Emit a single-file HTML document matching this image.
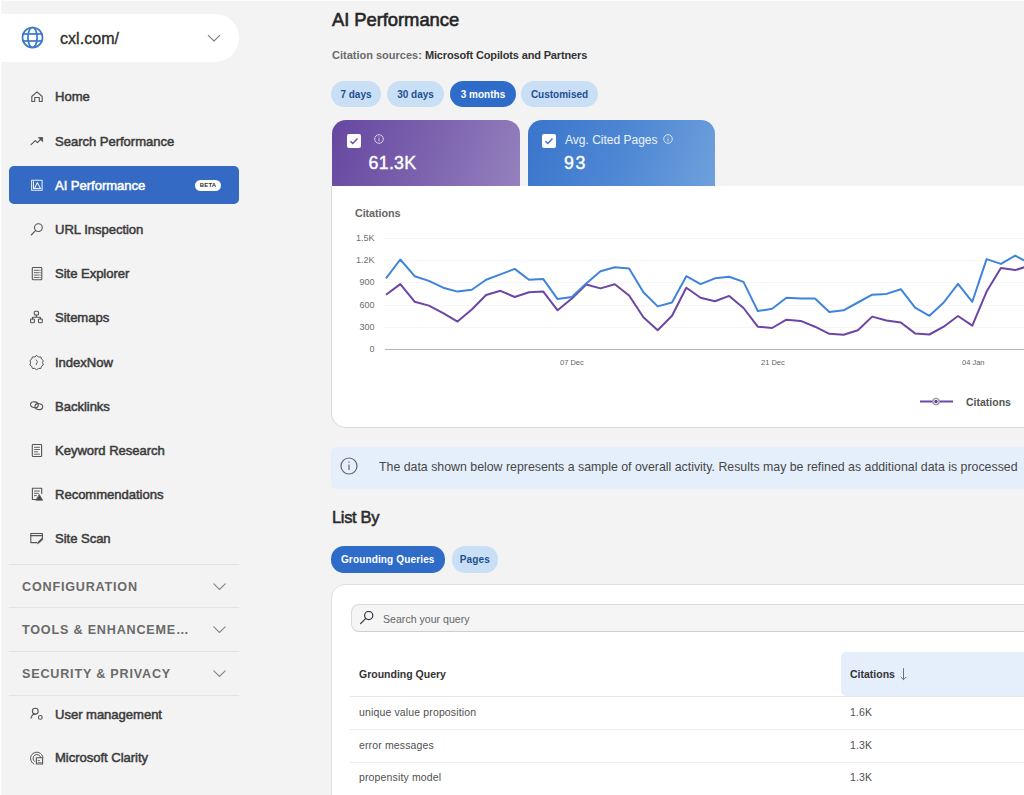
<!DOCTYPE html>
<html><head><meta charset="utf-8">
<style>
*{box-sizing:border-box;margin:0;padding:0}
html,body{width:1024px;height:795px;overflow:hidden;background:#f3f3f3;font-family:"Liberation Sans",sans-serif;color:#242424;position:relative}
.abs{position:absolute}
.topstrip{left:0;top:0;width:1024px;height:1px;background:#fbfbfb}
.leftstrip{left:0;top:0;width:2px;height:795px;background:linear-gradient(90deg,#fff 0 1px,#f7f7f7 1px 2px)}
/* sidebar */
.site{left:0;top:14px;width:239px;height:48px;background:#fff;border-radius:0 24px 24px 0}
.site .t{position:absolute;left:60px;top:16px;font-size:16px;color:#2e2e2e;letter-spacing:0.05px;-webkit-text-stroke:0.35px #2e2e2e}
.nav{left:9px;width:230px;height:38px;border-radius:5px}
.nav .lbl{position:absolute;left:46px;top:11.8px;font-size:13.1px;font-weight:400;letter-spacing:-0.05px;color:#3b3b3b;-webkit-text-stroke:0.5px #3b3b3b;white-space:nowrap}
.nav svg{position:absolute;left:22px;top:13.5px}
.nav.active{background:#3469c4}
.nav.active .lbl{color:#fff;-webkit-text-stroke-color:#fff}
.beta{position:absolute;left:186px;top:14px;width:26px;height:11px;background:#fff;border-radius:6px;font-size:6px;font-weight:700;color:#333;text-align:center;line-height:11px;letter-spacing:0.2px}
.sec{left:9px;width:230px;height:1px;background:#e3e3e3}
.sech{left:22px;font-size:12.6px;font-weight:700;letter-spacing:0.8px;color:#6a6a6a;white-space:nowrap}
.chev{left:213px}
</style></head>
<body>
<div class="abs topstrip"></div>
<div class="abs leftstrip"></div>

<!-- site selector -->
<div class="abs site">
  <svg class="abs" style="left:21px;top:12px" width="23" height="23" viewBox="0 0 23 23" fill="none" stroke="#3b78c9" stroke-width="1.7">
    <circle cx="11.5" cy="11.5" r="10"/>
    <ellipse cx="11.5" cy="11.5" rx="4.6" ry="10"/>
    <line x1="1.5" y1="8" x2="21.5" y2="8"/><line x1="1.5" y1="15" x2="21.5" y2="15"/>
  </svg>
  <div class="t">cxl.com/</div>
  <svg class="abs" style="left:207px;top:20px" width="14" height="8" viewBox="0 0 14 8" fill="none" stroke="#858585" stroke-width="1.2" stroke-linecap="round" stroke-linejoin="round"><path d="M1.3 1.3l5.7 5.7 5.7-5.7"/></svg>
</div>

<!-- nav items -->
<div class="abs nav" style="top:77px">
  <div class="lbl">Home</div>
</div>
<div class="abs nav" style="top:122px">
  <div class="lbl">Search Performance</div>
</div>
<div class="abs nav active" style="top:166px">
  <div class="lbl">AI Performance</div>
  <div class="beta">BETA</div>
</div>
<div class="abs nav" style="top:210px">
  <div class="lbl">URL Inspection</div>
</div>
<div class="abs nav" style="top:254px">
  <div class="lbl">Site Explorer</div>
</div>
<div class="abs nav" style="top:298px">
  <div class="lbl">Sitemaps</div>
</div>
<div class="abs nav" style="top:343px">
  <div class="lbl">IndexNow</div>
</div>
<div class="abs nav" style="top:387px">
  <div class="lbl">Backlinks</div>
</div>
<div class="abs nav" style="top:431px">
  <div class="lbl">Keyword Research</div>
</div>
<div class="abs nav" style="top:475px">
  <div class="lbl">Recommendations</div>
</div>
<div class="abs nav" style="top:519px">
  <div class="lbl">Site Scan</div>
</div>

<!-- section headers -->
<div class="abs sec" style="top:564px"></div>
<div class="abs sech" style="top:580px">CONFIGURATION</div>
<svg class="abs chev" style="top:583px" width="13" height="7" viewBox="0 0 13 7" fill="none" stroke="#858585" stroke-width="1.1" stroke-linecap="round"><path d="M0.8 0.8l5.7 5.7 5.7-5.7"/></svg>
<div class="abs sec" style="top:607px"></div>
<div class="abs sech" style="top:622.5px">TOOLS &amp; ENHANCEME…</div>
<svg class="abs chev" style="top:626px" width="13" height="7" viewBox="0 0 13 7" fill="none" stroke="#858585" stroke-width="1.1" stroke-linecap="round"><path d="M0.8 0.8l5.7 5.7 5.7-5.7"/></svg>
<div class="abs sec" style="top:651px"></div>
<div class="abs sech" style="top:666.5px">SECURITY &amp; PRIVACY</div>
<svg class="abs chev" style="top:670px" width="13" height="7" viewBox="0 0 13 7" fill="none" stroke="#858585" stroke-width="1.1" stroke-linecap="round"><path d="M0.8 0.8l5.7 5.7 5.7-5.7"/></svg>
<div class="abs sec" style="top:695px"></div>

<div class="abs nav" style="top:695px">
  <div class="lbl">User management</div>
</div>
<div class="abs nav" style="top:738.5px">
  <div class="lbl">Microsoft Clarity</div>
</div>


<svg class="abs" style="left:0;top:0" width="320" height="795" viewBox="0 0 320 795" fill="none" stroke="#555" stroke-width="1.1" stroke-linecap="round" stroke-linejoin="round">
  <!-- home -->
  <path d="M31.8 96.5L37 91.8l5.2 4.7V101.5H39.3V97.5h-4.6v4H31.8z"/>
  <!-- search perf -->
  <path d="M31 144.7L35.3 140.6 37.4 142.6 42 138"/><path d="M38.6 137.6H42.6V141.4z" fill="#4a4a4a" stroke-width="0.8"/>
  <!-- AI perf (white) -->
  <g stroke="#e9effa" stroke-width="1.05">
  <rect x="31.6" y="180.2" width="10.5" height="10"/>
  <path d="M33.5 181.5V188.5H40.5M34.5 188.5L37.3 182.5 40.3 188.3"/>
  </g>
  <!-- url inspection -->
  <circle cx="38.4" cy="227.6" r="3.9"/><path d="M35.5 230.6L31.3 235"/>
  <!-- site explorer -->
  <rect x="32.3" y="267.5" width="9.5" height="12.2" rx="0.8"/>
  <path d="M34.3 270.3h4.2M34.3 272.7h4.2M34.3 275.1h4.2M34.3 277.5h4.2" stroke-width="0.9"/><path d="M39.8 270.3h0.4M39.8 272.7h0.4M39.8 275.1h0.4M39.8 277.5h0.4" stroke-width="1"/>
  <!-- sitemaps -->
  <rect x="34.3" y="311.3" width="4.2" height="3.7" rx="1"/>
  <rect x="30.6" y="319" width="3.8" height="3.7" rx="0.6"/><rect x="38.5" y="319" width="3.8" height="3.7" rx="0.6"/>
  <path d="M36.4 315v2.3M32.5 319v-1.7h7.9V319"/>
  <!-- indexnow -->
  <path d="M36.6 355.6l1.9 1.4 2.3-0.1 0.7 2.2 1.8 1.4-0.7 2.2 0.7 2.2-1.8 1.4-0.7 2.2-2.3-0.1-1.9 1.4-1.9-1.4-2.3 0.1-0.7-2.2-1.8-1.4 0.7-2.2-0.7-2.2 1.8-1.4 0.7-2.2 2.3 0.1z" stroke-width="1"/>
  <path d="M36.1 359.8L37.4 361.6 36.3 364.6" stroke-width="0.9"/>
  <!-- backlinks -->
  <ellipse cx="34.4" cy="404.7" rx="3.9" ry="2.9" transform="rotate(12 34.4 404.7)"/>
  <ellipse cx="38.8" cy="406.6" rx="3.9" ry="2.9" transform="rotate(12 38.8 406.6)"/>
  <!-- keyword research -->
  <rect x="32.3" y="444.5" width="9.3" height="12" rx="0.8"/>
  <path d="M34.5 447.3h5M34.5 449.5h5M34.5 451.8h3M34.5 454.2h5" stroke-width="0.9"/>
  <!-- recommendations -->
  <path d="M36.5 499.5H32.4V488.3h9.3v5.3"/>
  <path d="M34.4 491h5M34.4 493.3h4M34.4 495.6h2" stroke-width="0.9"/>
  <path d="M39.4 494.8L42.6 500.2H36.2z" fill="#4a4a4a" stroke-width="0.8"/>
  <!-- site scan -->
  <path d="M36.8 542.6H30.8V533.5h11.6v5.2"/><path d="M30.8 535.6h11.6"/>
  <path d="M37.5 543.6l1-2.2 3.2-3 1.1 1.1-3.1 3.1z" fill="#4a4a4a" stroke-width="0.6"/>
  <!-- user management -->
  <circle cx="35.3" cy="711.2" r="2.9"/><path d="M31 718.2C31.5 715.6 33 714.2 35 714.1"/>
  <circle cx="40.3" cy="717.4" r="1.9"/>
  <!-- clarity -->
  <path d="M33.8 764A6.3 6.3 0 1 1 43 757.3" stroke-width="1"/>
  <path d="M34.6 761.5A3.9 3.9 0 1 1 40.8 757.8" stroke-width="1"/>
  <rect x="36.4" y="757.8" width="6.2" height="6.2" stroke-width="1.1" fill="#f3f3f3"/>
  <path d="M38 762.6h3.2M38 760.6h1.6" stroke-width="0.8"/>
</svg>

<!-- MAIN -->

<style>
.title{left:332px;top:9.3px;font-size:18.4px;font-weight:400;letter-spacing:-0.05px;color:#262626;-webkit-text-stroke:0.6px #262626;white-space:nowrap}
.cit{left:332px;top:49px;font-size:11px;font-weight:700;color:#6b6b6b;white-space:nowrap}
.cit b{color:#333;letter-spacing:-0.15px}
.pill{height:26px;border-radius:13px;background:#c9dff6;color:#1e4f93;font-size:10px;font-weight:700;text-align:center;line-height:28px;white-space:nowrap}
.pill.on{background:#2f6cc9;color:#fff}
.kpi{top:119.5px;height:66.5px;border-radius:14px 14px 0 0;overflow:hidden}
.chk{width:14px;height:14px;background:#fff;border-radius:2px}
.kval{font-size:17.8px;font-weight:400;color:#fff;white-space:nowrap;-webkit-text-stroke:0.4px #fff}
.card{background:#fff;border:1px solid #d9d9d9;border-top:none;border-radius:0 0 15px 15px}
.ylab{font-size:9px;color:#6e6e6e;text-align:right;width:30px;left:344.5px}
.xlab{font-size:7.5px;color:#666;white-space:nowrap}
</style>
<div class="abs title">AI Performance</div>
<div class="abs cit">Citation sources: <b>Microsoft Copilots and Partners</b></div>
<div class="abs pill" style="left:331px;top:81px;width:50px">7 days</div>
<div class="abs pill" style="left:387px;top:81px;width:57px">30 days</div>
<div class="abs pill on" style="left:450px;top:81px;width:66px">3 months</div>
<div class="abs pill" style="left:521px;top:81px;width:77px">Customised</div>

<!-- chart card -->
<div class="abs card" style="left:331px;top:186px;width:720px;height:242px"></div>

<div class="abs kpi" style="left:332px;width:188px;background:linear-gradient(110deg,#6647a0 0%,#7c62ae 50%,#9581bd 100%)">
  <div class="abs chk" style="left:15px;top:14.5px"><svg width="14" height="14" viewBox="0 0 14 14" fill="none" stroke="#6a4ba2" stroke-width="1.4"><path d="M3.5 7.2l2.3 2.3 4.7-5"/></svg></div>
  <svg class="abs" style="left:42px;top:14.5px" width="10" height="10" viewBox="0 0 10 10" fill="none" stroke="#e6def2" stroke-width="0.9"><circle cx="5" cy="5" r="4.3"/><path d="M5 4.3v3M5 2.6v0.8"/></svg>
  <div class="abs kval" style="left:36.5px;top:33.5px;letter-spacing:0.3px">61.3K</div>
</div>
<div class="abs kpi" style="left:528px;width:187px;background:linear-gradient(110deg,#3a75cc 0%,#5089d4 55%,#6ea1dc 100%)">
  <div class="abs chk" style="left:14px;top:14.5px"><svg width="14" height="14" viewBox="0 0 14 14" fill="none" stroke="#3b76cc" stroke-width="1.4"><path d="M3.5 7.2l2.3 2.3 4.7-5"/></svg></div>
  <div class="abs" style="left:37px;top:13.3px;font-size:12px;color:#eef3fb;white-space:nowrap">Avg. Cited Pages</div>
  <svg class="abs" style="left:135px;top:14px" width="10" height="10" viewBox="0 0 10 10" fill="none" stroke="#e6eef9" stroke-width="0.9"><circle cx="5" cy="5" r="4.3"/><path d="M5 4.3v3M5 2.6v0.8"/></svg>
  <div class="abs kval" style="left:36px;top:33.5px;letter-spacing:1.6px">93</div>
</div>

<div class="abs" style="left:355px;top:206.5px;font-size:10.8px;font-weight:700;color:#666;letter-spacing:-0.1px">Citations</div>
<div class="abs ylab" style="top:233px">1.5K</div>
<div class="abs ylab" style="top:255px">1.2K</div>
<div class="abs ylab" style="top:277px">900</div>
<div class="abs ylab" style="top:300px">600</div>
<div class="abs ylab" style="top:322px">300</div>
<div class="abs ylab" style="top:344px">0</div>
<div class="abs xlab" style="left:560px;top:357.5px">07 Dec</div>
<div class="abs xlab" style="left:761px;top:357.5px">21 Dec</div>
<div class="abs xlab" style="left:962px;top:357.5px">04 Jan</div>

<svg class="abs" style="left:0;top:0" width="1024" height="795" viewBox="0 0 1024 795">
  <g stroke="#f6f6f6" stroke-width="1">
    <line x1="383" y1="238.5" x2="1024" y2="238.5"/>
    <line x1="383" y1="260.5" x2="1024" y2="260.5"/>
    <line x1="383" y1="282.5" x2="1024" y2="282.5"/>
    <line x1="383" y1="305.5" x2="1024" y2="305.5"/>
    <line x1="383" y1="327.5" x2="1024" y2="327.5"/>
  </g>
  <line x1="385" y1="349.5" x2="1024" y2="349.5" stroke="#b5b5b5" stroke-width="1"/>
  <path d="M386.0 294.7 L400.3 284.1 L414.6 301.7 L428.9 305.6 L443.2 313.1 L457.5 321.6 L471.8 309.5 L486.1 295.0 L500.4 290.8 L514.7 297.0 L529.0 292.3 L543.3 291.6 L557.6 310.3 L571.9 298.6 L586.2 284.5 L600.5 288.4 L614.8 284.2 L629.1 295.5 L643.4 317.3 L657.7 330.3 L672.0 315.8 L686.3 287.7 L700.6 297.8 L714.9 301.2 L729.2 295.9 L743.5 308.0 L757.8 326.7 L772.1 328.0 L786.4 319.7 L800.7 320.9 L815.0 326.7 L829.3 333.8 L843.6 334.8 L857.9 330.3 L872.2 316.6 L886.5 320.5 L900.8 322.5 L915.1 333.4 L929.4 334.5 L943.7 326.7 L958.0 316.0 L972.3 325.7 L986.6 291.6 L1000.9 268.1 L1015.2 270.1 L1029.5 265.6" fill="none" stroke="#6b46a6" stroke-width="2" stroke-linejoin="round"/>
  <path d="M386.0 278.3 L400.3 259.5 L414.6 276.2 L428.9 280.9 L443.2 287.7 L457.5 291.6 L471.8 289.7 L486.1 279.8 L500.4 274.4 L514.7 268.9 L529.0 279.8 L543.3 279.1 L557.6 299.1 L571.9 297.0 L586.2 283.4 L600.5 271.2 L614.8 267.3 L629.1 268.6 L643.4 292.3 L657.7 306.4 L672.0 302.5 L686.3 276.2 L700.6 284.2 L714.9 278.3 L729.2 276.7 L743.5 281.9 L757.8 311.1 L772.1 308.8 L786.4 297.8 L800.7 298.6 L815.0 298.6 L829.3 311.9 L843.6 310.3 L857.9 302.5 L872.2 294.7 L886.5 293.9 L900.8 289.2 L915.1 307.7 L929.4 315.8 L943.7 302.5 L958.0 283.9 L972.3 301.8 L986.6 259.1 L1000.9 263.9 L1015.2 255.6 L1029.5 263.5" fill="none" stroke="#3f84dc" stroke-width="2" stroke-linejoin="round"/>
  <line x1="920" y1="401.5" x2="953" y2="401.5" stroke="#6a4aa8" stroke-width="2"/>
  <circle cx="936" cy="401.5" r="3.1" fill="#fff" stroke="#9a9a9a" stroke-width="1.3"/>
  <circle cx="936" cy="401.5" r="1.7" fill="#5e3fa0"/>
</svg>
<div class="abs" style="left:966px;top:395.5px;font-size:10.5px;font-weight:700;color:#555;white-space:nowrap">Citations</div>

<!-- banner -->
<div class="abs" style="left:331px;top:447px;width:720px;height:42px;background:#e5effb;border-radius:5px"></div>
<svg class="abs" style="left:340px;top:457px" width="18" height="18" viewBox="0 0 18 18" fill="none" stroke="#666" stroke-width="1.2"><circle cx="9" cy="9" r="8"/><path d="M9 7.5v5.5M9 4.6v1.2"/></svg>
<div class="abs" style="left:379px;top:460px;font-size:12.35px;color:#474747;white-space:nowrap">The data shown below represents a sample of overall activity. Results may be refined as additional data is processed</div>

<div class="abs" style="left:332px;top:507.5px;font-size:16.5px;font-weight:400;letter-spacing:-0.35px;color:#2b2b2b;-webkit-text-stroke:0.55px #2b2b2b">List By</div>
<div class="abs pill on" style="left:331px;top:546.3px;width:113.5px;height:26.8px;letter-spacing:0.15px">Grounding Queries</div>
<div class="abs pill" style="left:451.5px;top:546.3px;width:46.5px;height:26.8px;letter-spacing:0.15px">Pages</div>

<!-- table card -->
<div class="abs" style="left:331px;top:584px;width:720px;height:260px;background:#fff;border:1px solid #e0e0e0;border-radius:14px"></div>
<div class="abs" style="left:351px;top:604.3px;width:700px;height:27.3px;background:#f5f5f5;border:1px solid #d9d9d9;border-bottom-color:#cfcfcf;border-radius:8px"></div>
<svg class="abs" style="left:360px;top:611px" width="14" height="14" viewBox="0 0 14 14" fill="none" stroke="#3a3a3a" stroke-width="1.25" stroke-linecap="round"><circle cx="8.7" cy="4.5" r="4.1"/><path d="M5.8 7.4L0.6 12.6"/></svg>
<div class="abs" style="left:383px;top:612.5px;font-size:10.6px;color:#666;white-space:nowrap">Search your query</div>

<div class="abs" style="left:841px;top:652px;width:200px;height:44px;background:#e5effb;border-radius:5px 0 0 5px"></div>
<div class="abs" style="left:359px;top:668px;font-size:10.5px;font-weight:700;color:#333;white-space:nowrap">Grounding Query</div>
<div class="abs" style="left:850px;top:668px;font-size:10.5px;font-weight:700;color:#333;white-space:nowrap">Citations</div>
<svg class="abs" style="left:899px;top:666px" width="9" height="15" viewBox="0 0 9 15" fill="none" stroke="#707070" stroke-width="1"><path d="M4.5 2.2v11.5M1.8 11l2.7 2.7L7.2 11"/></svg>
<div class="abs" style="left:350px;top:696px;width:700px;height:1px;background:#e6e6e6"></div>
<div class="abs" style="left:350px;top:729px;width:700px;height:1px;background:#ececec"></div>
<div class="abs" style="left:350px;top:762px;width:700px;height:1px;background:#ececec"></div>
<div class="abs" style="left:359px;top:706px;font-size:10.5px;color:#505050;letter-spacing:0.14px;white-space:nowrap">unique value proposition</div>
<div class="abs" style="left:359px;top:739px;font-size:10.5px;color:#505050;letter-spacing:0.14px;white-space:nowrap">error messages</div>
<div class="abs" style="left:359px;top:771px;font-size:10.5px;color:#505050;letter-spacing:0.14px;white-space:nowrap">propensity model</div>
<div class="abs" style="left:850px;top:706px;font-size:10.5px;color:#505050;letter-spacing:0.14px;white-space:nowrap">1.6K</div>
<div class="abs" style="left:850px;top:739px;font-size:10.5px;color:#505050;letter-spacing:0.14px;white-space:nowrap">1.3K</div>
<div class="abs" style="left:850px;top:771px;font-size:10.5px;color:#505050;letter-spacing:0.14px;white-space:nowrap">1.3K</div>

</body></html>
